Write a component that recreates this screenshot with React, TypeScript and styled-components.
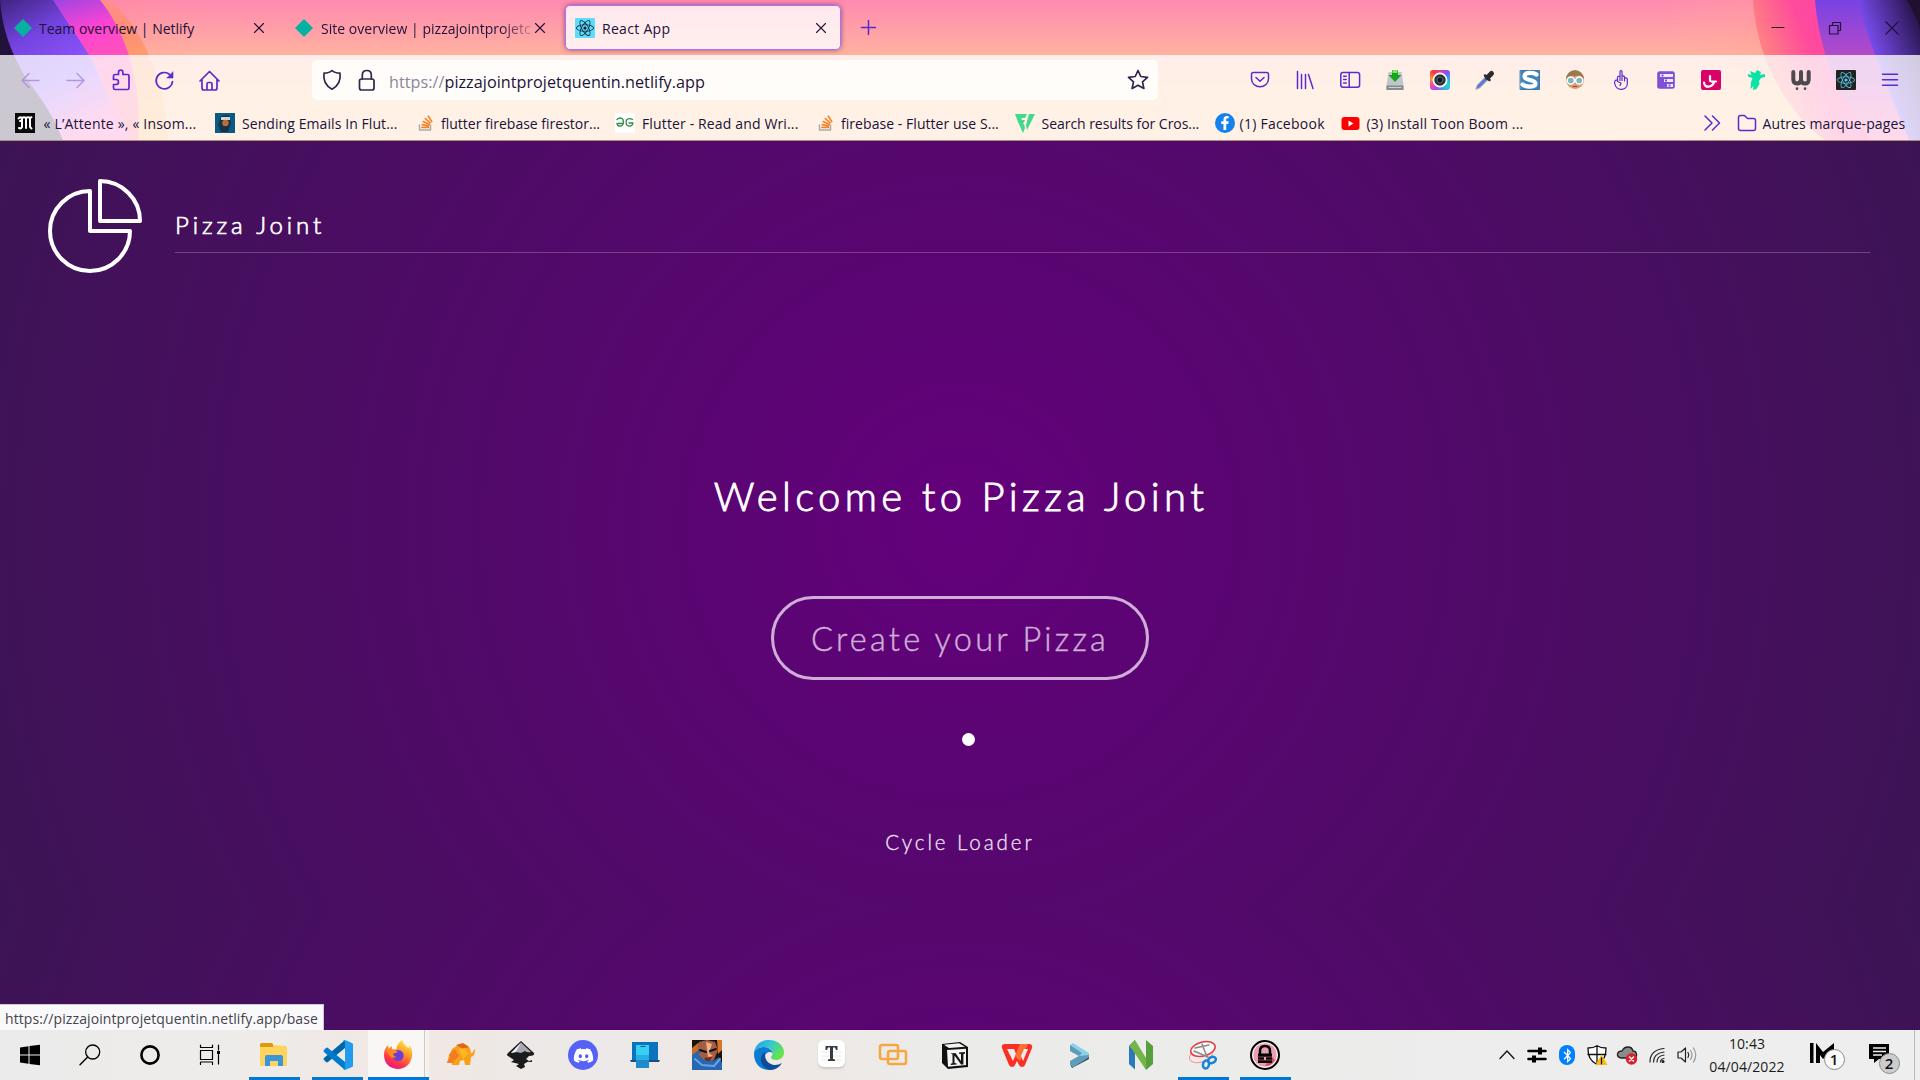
import React from 'react';
import styled, { createGlobalStyle } from 'styled-components';
import { FaDiscord, FaReact, FaBluetoothB, FaFacebookF } from 'react-icons/fa';

const GlobalStyle = createGlobalStyle`
  * { box-sizing: border-box; }
  html, body { margin: 0; padding: 0; }
  body { width: 1920px; height: 1080px; overflow: hidden; font-family: 'Open Sans', 'Noto Sans', sans-serif; }
  svg { display: block; overflow: visible; flex: none; }
`;

const ACCENT = '#5b2bcb';
const INK = '#20123a';

const Screen = styled.div`
  width: 1920px; height: 1080px; display: flex; flex-direction: column; position: relative;
`;
const Chrome = styled.header`
  position: relative; height: 141px; flex: none; display: flex; flex-direction: column; overflow: hidden;
  background: linear-gradient(180deg, #ff8ab0 0, #ffb2a0 55px, #ffc494 95px, #ffc494 100%);
`;
const Backdrop = styled.svg`
  position: absolute; left: 0; top: 0;
`;
const TabStrip = styled.div`
  position: relative; height: 55px; display: flex; align-items: center;
`;
const Tab = styled.div<{ $active?: boolean; $w: number; $pad: number }>`
  width: ${p => p.$w}px; height: 45px; display: flex; align-items: center; padding-left: ${p => p.$pad}px;
  padding-right: 10px; border-radius: 5px; border: 1px solid ${p => (p.$active ? '#ac70ff' : 'transparent')};
  background: ${p => (p.$active ? 'rgba(255,255,255,.8)' : 'transparent')};
  box-shadow: ${p => (p.$active ? '0 0 5px rgba(90,30,80,.65)' : 'none')};
`;
const TabTitle = styled.span<{ $fade?: boolean; $ls?: number }>`
  flex: 1; min-width: 0; margin-left: ${p => (p.$fade ? 8 : 7)}px; padding-top: 2px; font-size: 14px; line-height: 20px; letter-spacing: ${p => p.$ls ?? 0}px; color: ${INK}; white-space: nowrap;
  ${p => p.$fade && 'mask-image: linear-gradient(90deg, #000 84%, transparent 102%);'}
`;
const NewTab = styled.div`
  margin-left: 20px; flex: 1;
`;
const WindowControls = styled.div`
  display: flex; align-items: center; gap: 43px; padding-right: 21px;
`;
const Toolbars = styled.div`
  position: relative; height: 86px; background: rgba(255,255,255,.77); border-bottom: 1px solid #b08a74;
`;
const NavBar = styled.div`
  height: 50px; display: flex; align-items: center;
`;
const NavButtons = styled.div`
  width: 312px; display: flex; align-items: center; gap: 21.8px; padding-left: 19px;
`;
const UrlBar = styled.div`
  width: 846px; height: 40px; border-radius: 5px; background: rgba(255,253,250,.94); display: flex; align-items: center;
  padding: 0 9px 0 8px;
`;
const Url = styled.span`
  flex: 1; margin-left: 11px; font-size: 16.2px; line-height: 22px; color: ${INK}; letter-spacing: .03px; padding-top: 4px; white-space: nowrap;
`;
const UrlScheme = styled.span` color: #8d869a; `;
const Extensions = styled.div`
  flex: 1; display: flex; align-items: center; justify-content: space-between; padding: 0 21px 0 92px;
`;
const Bookmarks = styled.div`
  height: 35px; display: flex; align-items: center; padding-left: 14.5px; padding-top: 1px;
`;
const Bookmark = styled.div<{ $w: number; $ls?: number }>`
  width: ${p => p.$w}px; display: flex; align-items: center; gap: 7px; font-size: 14px; line-height: 20px; color: ${INK};
  white-space: nowrap; letter-spacing: ${p => p.$ls ?? 0}px;
`;
const BookmarkText = styled.span` padding-top: 2px; `;
const Spacer = styled.div<{ $w?: number }>` flex: ${p => (p.$w ? `0 0 ${p.$w}px` : '1')}; `;

const Page = styled.main`
  height: 889px; position: relative; color: #fff; font-family: Lato, 'Open Sans', sans-serif; font-weight: 300; padding-top: 38px;
  background: radial-gradient(circle, #64007c 0%, #3c1454 100%) 0 0 / 1920px 766px repeat-y;
`;
const PageHeader = styled.div`
  display: flex; padding-left: 50px; padding-right: 50px;
`;
const TitleBlock = styled.div`
  flex: 1; margin-left: 25px; height: 74px; border-bottom: 1px solid rgba(255,255,255,.22); padding-top: 29px;
`;
const SiteTitle = styled.h1`
  margin: 0; font-size: 24px; line-height: 34px; font-weight: 300; letter-spacing: 3.9px; -webkit-text-stroke: .7px #fff;
`;
const Hero = styled.section`
  display: flex; flex-direction: column; align-items: center; padding-top: 192px;
`;
const Welcome = styled.h2`
  margin: 0; font-size: 40px; line-height: 50px; font-weight: 300; letter-spacing: 4.35px; white-space: nowrap; padding-left: 2px;
  -webkit-text-stroke: .9px #fff;
`;
const CreateButton = styled.button`
  margin-top: 75px; width: 378px; height: 84px; border: 3px solid #ceadd6; border-radius: 42px; background: transparent; color: #ceadd6;
  font-family: inherit; font-size: 32.5px; font-weight: 300; letter-spacing: 3.25px; padding: 0; white-space: nowrap;
  -webkit-text-stroke: .45px #ceadd6;
`;
const Ball = styled.div`
  width: 13px; height: 13px; border-radius: 50%; background: #fff; margin: 53px 0 0 17px;
`;
const LoaderLabel = styled.div`
  margin-top: 83px; font-size: 20.6px; line-height: 26px; letter-spacing: 2.9px; white-space: nowrap; color: #eee3f1;
  -webkit-text-stroke: .3px #eee3f1;
`;
const Status = styled.div`
  position: absolute; left: 0; bottom: 50px; width: 324px; height: 26px; background: #f9f9fb; border-top: 1px solid #d0c8d4; border-right: 1px solid #d0c8d4;
  padding: 4px 0 0 5px; font-size: 14px; line-height: 20px; color: #45434c; white-space: nowrap; letter-spacing: .1px;
`;
const Taskbar = styled.footer`
  height: 50px; flex: none; display: flex; align-items: stretch;
  background: linear-gradient(90deg, #ebebeb 0, #eeecea 220px, #f0e8e3 400px, #ece9e8 600px, #f0e8e3 780px, #ebebea 920px, #eee 100%);
`;
const Slot = styled.div<{ $w?: number; $run?: boolean; $active?: boolean }>`
  width: ${p => p.$w ?? 62}px; display: flex; flex-direction: column; align-items: center; padding-top: 10px; justify-content: space-between;
  background: ${p => (p.$active ? 'linear-gradient(90deg, transparent 1px, #f8f7f6 1px, #f8f7f6 57px, #cfcac8 57px, #cfcac8 58px, #f4f1ef 58px)' : 'transparent')};
  &::after {
    content: ''; height: 3px; width: ${p => (p.$active ? 61 : 51)}px; background: ${p => (p.$run || p.$active ? '#0078d7' : 'transparent')};
    margin-left: ${p => (p.$active ? 1 : 0)}px;
  }
`;
const Tray = styled.div`
  display: flex; flex: 1; justify-content: flex-end; align-items: center;
`;
const TrayItem = styled.div<{ $w: number }>`
  width: ${p => p.$w}px; display: flex; justify-content: center; align-items: center;
`;
const Clock = styled.div`
  width: 88px; display: flex; flex-direction: column; align-items: center; font-size: 14px; line-height: 23px; color: #1b1b1b; padding: 0 0 1px 2px; letter-spacing: .1px;
`;
const Badged = styled.div`
  position: relative; height: 34px; width: 36px;
`;
const Badge = styled.span<{ $dark?: boolean }>`
  position: absolute; right: ${p => (p.$dark ? 1 : -1)}px; top: ${p => (p.$dark ? 15 : 11)}px; width: 21px; height: 21px; border-radius: 50%; border: 1px solid #8a8a8a;
  background: ${p => (p.$dark ? '#ccc' : '#fafafa')}; font-size: 15px; font-weight: 600; line-height: 19px; text-align: center; color: #111;
`;
const ShowDesktop = styled.div` width: 6px; height: 50px; border-left: 1px solid #bbb; `;
const Tile = styled.div<{ $bg: string; $c: string; $size?: number; $h?: number; $r?: number; $mr?: number; $lift?: boolean }>`
  width: ${p => p.$size ?? 20}px; height: ${p => p.$h ?? p.$size ?? 20}px; flex: none; display: flex; align-items: center; justify-content: center;
  background: ${p => p.$bg}; color: ${p => p.$c}; border-radius: ${p => p.$r ?? 0}px; margin-right: ${p => p.$mr ?? 0}px;
  box-shadow: ${p => (p.$lift ? '0 2px 2px #ccc' : 'none')};
`;

type IconProps = { s?: number; vb?: string; children: React.ReactNode; stroke?: string; sw?: number };
const Ico = ({ s = 20, vb = '0 0 20 20', children, stroke, sw = 1.5 }: IconProps) => (
  <svg width={s} height={s} viewBox={vb} fill={stroke ? 'none' : undefined} stroke={stroke} strokeWidth={stroke ? sw : undefined} strokeLinecap="round" strokeLinejoin="round">
    {children}
  </svg>
);
const Cross = () => <Ico s={10} vb="0 0 10 10" stroke={INK} sw={1.1}><path d="M.5.5l9 9M9.5.5l-9 9" /></Ico>;
const Diamond = () => <Ico s={18} vb="0 0 18 18"><path d="M9 0l9 9-9 9-9-9z" fill="#05b2a2" /></Ico>;
const StackIcon = () => (
  <Ico s={16} vb="0 0 16 16"><path d="M1.500 10v5h11v-5" fill="none" stroke="#a9abae" strokeWidth="1.5" />
    <path d="M4 12.400h6.500M4.200 9.600l6.400 1.200M5.200 6.600l5.900 2.700M7.300 3.600l4.900 4.200M10.300 1.200l3.500 5.400" stroke="#f48024" strokeWidth="1.6" /></Ico>
);

const ShapesBackdrop = () => (
  <Backdrop width="1920" height="141" viewBox="0 0 1920 141">
    <defs>
      <linearGradient id="glow" x1="0" x2="1"><stop offset="0" stopColor="#ff8a80" /><stop offset="1" stopColor="#ffa090" stopOpacity="0" /></linearGradient>
      <linearGradient id="orange" x1="0" x2=".3" y1="0" y2="1"><stop offset="0" stopColor="#ff8aa4" /><stop offset=".4" stopColor="#ff8f74" /><stop offset="1" stopColor="#ffb060" /></linearGradient>
      <linearGradient id="magenta" x1="0" x2=".25" y1="0" y2="1"><stop offset="0" stopColor="#7c44e6" /><stop offset=".34" stopColor="#ff44d4" /><stop offset="1" stopColor="#ff6a8a" /></linearGradient>
      <linearGradient id="indigo" x1="0" x2=".5" y1="0" y2="1"><stop offset="0" stopColor="#3f2480" /><stop offset=".3" stopColor="#7443e0" /><stop offset=".65" stopColor="#9058ff" /><stop offset="1" stopColor="#ff60c0" /></linearGradient>
      <linearGradient id="pinkR" gradientUnits="userSpaceOnUse" x1="1755" y1="20" x2="1805" y2="0"><stop offset="0" stopColor="#ff7d84" /><stop offset=".75" stopColor="#ff4b9c" /><stop offset="1" stopColor="#ff48a0" /></linearGradient>
      <linearGradient id="purpleR" x1="0" x2="0" y1="0" y2="1"><stop offset="0" stopColor="#7942e4" /><stop offset=".4" stopColor="#b44bc8" /><stop offset="1" stopColor="#ff5fa8" /></linearGradient>
      <linearGradient id="indigoR" x1=".9" x2=".3" y1="0" y2=".5"><stop offset="0" stopColor="#241245" /><stop offset="1" stopColor="#7f50fa" /></linearGradient>
      <linearGradient id="haze" x1="0" x2="1"><stop offset="0" stopColor="#ffb0a0" stopOpacity="0" /><stop offset="1" stopColor="#ff9f8c" /></linearGradient>
    </defs>
    <path d="M108 0H200V60H150z" fill="url(#glow)" opacity=".25" />
    <path d="M0 0H110C140 26 165 75 168 141H0z" fill="url(#orange)" />
    <path d="M0 0H100C128 35 142 85 138 141H0z" fill="url(#magenta)" />
    <path d="M0 0H53C72 30 92 55 101 80C112 105 124 120 130 141H0z" fill="url(#indigo)" />
    <path d="M0 0C2 30 12 55 26 78C42 100 55 118 63 141H0z" fill="#20123a" />
    <path d="M1660 0H1753C1756 30 1765 50 1775 76L1700 60z" fill="url(#haze)" opacity=".35" />
    <path d="M1753 0C1756 62 1792 118 1826 141H1920V0z" fill="url(#pinkR)" />
    <path d="M1815 0C1819 54 1842 105 1872 141H1920V0z" fill="url(#purpleR)" />
    <path d="M1857 0C1870 46 1889 90 1909 141H1920V0z" fill="url(#indigoR)" />
    <path d="M1907 0Q1914 12 1920 27V0z" fill="#20102f" />
  </Backdrop>
);

const ExtensionIcons = () => (
  <Extensions>
    <Ico stroke={ACCENT}><path d="M3.200 2.500h13.600q1.700 0 1.700 1.700v4.600a8.500 8 0 0 1-17 0V4.200q0-1.700 1.700-1.700zM6 7.500l4 3.800 4-3.800" /></Ico>
    <Ico stroke={ACCENT}><path d="M2.500 1.500v17M6.500 4.500v14M10.500 4.500v14M13.500 4.500l4.500 14" /></Ico>
    <Ico stroke={ACCENT}><rect x=".8" y="2.5" width="18.8" height="14.8" rx="2.2" /><path d="M9.200 2.500v15M3.600 6.300h2.600M3.600 9.600h2.600M3.600 12.900h2.600" /></Ico>
    <Ico><path d="M3.500 2h13l2 13v5h-17v-5z" fill="#c3c5cc" /><path d="M1.500 15.500h17V20h-17z" fill="#858b91" /><path d="M4 17.500h12" stroke="#c9d6c9" /><path d="M7 0h6v5h3.500L10 12 3.500 5H7z" fill="#18a51a" /><path d="M7.500 0h5v3h-5z" fill="#7ee66c" /></Ico>
    <Tile $bg="conic-gradient(#f03a8c,#8c4df0,#2aa4f5,#22d6c8,#49a0f5,#a14df0,#f04d9a,#ff9430,#f03a3a,#f03a8c)" $c="#fff" $r={3}>
      <Ico s={18} vb="0 0 18 18"><circle cx="9" cy="9" r="6.6" fill="#28323c" stroke="#fff" strokeWidth="1.7" /><circle cx="9" cy="9" r="3" fill="#101820" stroke="#566470" /></Ico>
    </Tile>
    <Ico><path d="M1 19l1.500-4 8-8 2.500 2.500-8 8z" fill="#5b78d8" stroke="#9aa2ae" /><path d="M10 5.500l4.500 4.500" stroke="#2b2b30" strokeWidth="2.5" strokeLinecap="round" /><path d="M12.500 7.500l4-4" stroke="#2b2b30" strokeWidth="5" strokeLinecap="round" /></Ico>
    <Ico><path d="M.5.5h19v19H.5z" fill="#4585bd" stroke="#3a76a8" /><path d="M16.500 4.500C13 2 4.500 2 4.500 6.500 4.500 11 15.500 9 15.500 13.500 15.500 17.500 6 17.300 2.500 14.500" fill="none" stroke="#fff" strokeWidth="4.2" /></Ico>
    <Ico><circle cx="10" cy="10" r="9" fill="#d99b73" /><path d="M1 9a9 9 0 0 1 18 0l-4-3.500-10 1z" fill="#9a7a4c" /><circle cx="5.8" cy="10.5" r="3.6" fill="#7fb6c4" stroke="#fff" strokeWidth="1.5" /><circle cx="14.2" cy="10.5" r="3.6" fill="#7fb6c4" stroke="#fff" strokeWidth="1.5" /><path d="M8 16.500h4" stroke="#a4473c" /></Ico>
    <Ico stroke={ACCENT} sw={1.2}><path d="M9 10.500V1.300q1-1.600 2 0v9.200M9 6.500q-2.300-.8-2.500 1V11M11 6q2.500-.5 2.500 1.500V11M13.500 8q2.800-.5 2.800 1.500v4c0 7.500-11 8-12.600 0-.5-2.500.8-3.800 2.800-3.500M6.500 11.500l3.500 1.500-1 2.500" /></Ico>
    <Ico><rect x="1.2" y="1.2" width="17.6" height="17.6" rx="2.5" fill="#7e50d4" /><path d="M4 4h13v3H4zM8 9h9v3H8zM11 14h6v3h-6z" fill="#efe6ff" /><path d="M5.500 4.500h2v2h-2zM9 9.500h2v2H9zM12.500 14.500h2v2h-2z" fill="#7e50d4" /></Ico>
    <Tile $bg="#d90368" $c="#fff" $r={2}><Ico><path d="M9 6v4.500q0 1 1.500 1H15M3 12.500q.5 5 5.500 4 4-1 4.500-5" fill="none" stroke="#fff" strokeWidth="2.2" /></Ico></Tile>
    <Ico><path d="M4 1l5 2 2-3 4 2-1 3 5-1v3l-4 1-2 3 .5 3-3 5-3.500 1 .5-4-3 3 .5-7 1.500-4-4-1-1-3 4 1z" fill="#0be2a6" /></Ico>
    <Ico stroke="#4b4b4b" sw={4}><path d="M2.300 2v7q0 4.500 3.700 4.500T10 9.500V2M10 9.500q0 4 4 4t3.700-4.500V2" /><path d="M6 18.600v.1M14 18.600v.1" strokeWidth="2.6" /></Ico>
    <Tile $bg="#222" $c="#56c7e8" $r={1}><FaReact size={18} /></Tile>
    <Ico s={18} vb="0 0 18 18" stroke={ACCENT}><path d="M1.500 3.300h15M1.500 8.700h15M1.500 14.300h15" /></Ico>
  </Extensions>
);

const BrowserChrome = () => (
  <Chrome>
    <ShapesBackdrop />
    <TabStrip>
      <Tab $w={281} $pad={13}><Diamond /><TabTitle>Team overview | Netlify</TabTitle><Cross /><Spacer $w={6} /></Tab>
      <Tab $w={284} $pad={13}><Diamond /><TabTitle $fade $ls={0.03}>Site overview | pizzajointprojetc</TabTitle><Cross /><Spacer $w={9} /></Tab>
      <Tab $active $w={276} $pad={9}>
        <Tile $bg="#5edcfc" $c="#123" $r={1}><FaReact size={18} /></Tile>
        <TabTitle $ls={0.3}>React App</TabTitle><Cross /><Spacer $w={4} />
      </Tab>
      <NewTab><Ico s={15} vb="0 0 15 15" stroke={ACCENT}><path d="M7.500.5v14M.5 7.500h14" /></Ico></NewTab>
      <WindowControls>
        <Ico s={14} vb="0 0 14 14" stroke={INK} sw={1.2}><path d="M1 6.500h12" /></Ico>
        <Ico s={14} vb="0 0 14 14" stroke={INK} sw={1.2}><path d="M1.500 4.500h8.500v8.500H1.500zM4.500 4V1.500h8v8H10.500" /></Ico>
        <Ico s={14} vb="0 0 14 14" stroke={INK} sw={1.2}><path d="M1 1l12 12M13 1L1 13" /></Ico>
      </WindowControls>
    </TabStrip>
    <Toolbars>
      <NavBar>
        <NavButtons>
          <Ico s={23} vb="0 0 23 23" stroke="#b297e0"><path d="M3 11.500h17M10 4.500l-7 7 7 7" /></Ico>
          <Ico s={23} vb="0 0 23 23" stroke="#b297e0"><path d="M3 11.500h17M13 4.500l7 7-7 7" /></Ico>
          <Ico s={23} vb="0 0 23 23" stroke={ACCENT} sw={1.7}><path d="M4 9V7.500q0-1.500 1.500-1.500H9V4q0-2.500 2.200-2.500T13.400 4v2H18q1.500 0 1.500 1.500v12q0 1.500-1.500 1.500H5.500Q4 21 4 19.500V16h2.500Q9 16 9 13.500T6.500 11H4z" transform="translate(.5 -.5)" /></Ico>
          <Ico s={23} vb="0 0 23 23" stroke={ACCENT} sw={1.7}><path d="M19.500 12.500a8.200 8.200 0 1 1-2.800-7" /><path d="M20 3v6h-6z" fill={ACCENT} strokeWidth=".6" /></Ico>
          <Ico s={23} vb="0 0 23 23" stroke={ACCENT} sw={1.7}><path d="M2 12l9.500-9.500L21 12M4 10.500V19q0 2 2 2h11q2 0 2-2v-8.500M9 21v-6q0-1.500 1.500-1.500h2q1.500 0 1.500 1.500v6" /></Ico>
        </NavButtons>
        <UrlBar>
          <Ico s={24} vb="0 0 24 24" stroke="#33244c" sw={1.7}><path d="M12 2.500q2.500 2.500 8 2.700 1.500 11-8 16-9.500-5-8-16 5.500-.2 8-2.700z" /></Ico>
          <Spacer $w={12} />
          <Ico s={22} vb="0 0 22 22" stroke="#33244c" sw={1.7}><rect x="3.5" y="10" width="14.5" height="11" rx="2" /><path d="M6.300 10V6q0-4.500 4.500-4.500T15.300 6v4" /></Ico>
          <Url><UrlScheme>https://</UrlScheme>pizzajointprojetquentin.netlify.app</Url>
          <Ico s={22} vb="0 0 22 22" stroke="#33244c" sw={1.7}><path d="M11 1.500l2.800 6 6.700.8-5 4.500 1.400 6.700-5.900-3.300-5.900 3.300 1.400-6.700-5-4.500 6.700-.8z" /></Ico>
        </UrlBar>
        <ExtensionIcons />
      </NavBar>
      <Bookmarks>
        <Bookmark $w={200.5} $ls={0.18}><Tile $bg="#090909" $c="#fff" $mr={2}><Ico><path d="M3.500 5.500Q5 3.500 7 5q2-1.500 4 0 2-1.500 4 0l1.500-.8M5 8q2 0 2-2v8q-1 2-3 1M11 5v10M15 5.500v8.500l1.500 1.500" fill="none" stroke="#fff" strokeWidth="2" /></Ico></Tile><BookmarkText>« L’Attente », « Insom...</BookmarkText></Bookmark>
        <Bookmark $w={203} $ls={0.08}><Tile $bg="#0b5a82" $c="#fff"><Ico><path d="M6 3l8-1 2 8-3 9H6L3 12z" fill="#153447" /><path d="M6 4h9v3H6z" fill="#c8d8d8" /><circle cx="10.5" cy="10" r="3.2" fill="#c06a3e" /></Ico></Tile><BookmarkText>Sending Emails In Flut...</BookmarkText></Bookmark>
        <Bookmark $w={197}><StackIcon /><BookmarkText>flutter firebase firestor...</BookmarkText></Bookmark>
        <Bookmark $w={203} $ls={0.14}><Tile $bg="#fff" $c="#2f8d46"><Ico><path d="M2 6.500q3.500-3 6 0 1.500 5-2 6.500Q2 13.500 2 10.500h6M17.500 6.500q-4-2-6 .5-1.500 5 2 6 4 .5 4.500-3h-4" fill="none" stroke="#2f8d46" strokeWidth="1.3" /></Ico></Tile><BookmarkText>Flutter - Read and Wri...</BookmarkText></Bookmark>
        <Bookmark $w={196.5} $ls={0.05}><StackIcon /><BookmarkText>firebase - Flutter use S...</BookmarkText></Bookmark>
        <Bookmark $w={200} $ls={-0.04}><Ico><path d="M0 1h12l-2 4H6l1 2h3l-2 4h1l1 4-2 5L3 9zM14 1h6l-8 16-1-5z" fill="#43d78f" /></Ico><BookmarkText>Search results for Cros...</BookmarkText></Bookmark>
        <Bookmark $w={126} $ls={0.25}><Tile $bg="#1382f0" $c="#fff" $r={10} $mr={-2}><FaFacebookF size={14} /></Tile><BookmarkText>(1) Facebook</BookmarkText></Bookmark>
        <Bookmark $w={200} $ls={0.16}><Ico s={19} vb="0 0 19 19"><rect x=".5" y="3" width="18" height="13" rx="3" fill="#f00" /><path d="M7.500 6.500l5 3-5 3z" fill="#fff" /></Ico><BookmarkText>(3) Install Toon Boom ...</BookmarkText></Bookmark>
        <Spacer />
        <Ico s={20} stroke={ACCENT}><path d="M3 3l7 7-7 7M10.500 3l7 7-7 7" /></Ico>
        <Spacer $w={16} />
        <Bookmark $w={182.5} $ls={0.1}><Ico s={18} vb="0 0 18 18" stroke={ACCENT}><path d="M.5 14.500V3.500q0-2 2-2h4l3 3h6q2 0 2 2v8q0 2-2 2h-13q-2 0-2-2z" /></Ico><BookmarkText>Autres marque-pages</BookmarkText></Bookmark>
      </Bookmarks>
    </Toolbars>
  </Chrome>
);

const PizzaPage = () => (
  <Page>
    <PageHeader>
      <svg width="100" height="100" viewBox="0 0 100 100" fill="none" stroke="#fff" strokeWidth="4" strokeLinejoin="round">
        <g transform="translate(0 12)">
          <path d="M40 40L80 40C80 62 62 80 40 80C18 80 0 62 0 40C0 18 18 0 40 0Z" />
          <path d="M50 30L50 -10C72 -10 90 8 90 30Z" />
        </g>
      </svg>
      <TitleBlock><SiteTitle>Pizza Joint</SiteTitle></TitleBlock>
    </PageHeader>
    <Hero>
      <Welcome>Welcome to Pizza Joint</Welcome>
      <CreateButton>Create your Pizza</CreateButton>
      <Ball />
      <LoaderLabel>Cycle Loader</LoaderLabel>
    </Hero>
  </Page>
);

const A = ({ children }: { children: React.ReactNode }) => <Ico s={30} vb="0 0 30 30">{children}</Ico>;

const DesktopTaskbar = () => (
  <Taskbar>
    <Slot $w={60}><A><path d="M5 7.400l8.500-1.200v8.300H5zM14.500 6L25 4.800v9.700H14.500zM5 15.500h8.500v8.300L5 22.600zM14.500 15.500H25v9.700L14.500 24z" /></A></Slot>
    <Slot $w={60}><A><circle cx="17.7" cy="12" r="7" fill="none" stroke="#000" strokeWidth="1.3" /><path d="M12.700 17L5 24.700" stroke="#000" strokeWidth="1.4" /></A></Slot>
    <Slot $w={60}><A><circle cx="15" cy="15" r="8.6" fill="none" stroke="#000" strokeWidth="2.6" /></A></Slot>
    <Slot $w={60}><A><path d="M5.500 10.500h12v9h-12zM5.500 5v2.500h12V5M5.500 24.500V22h12v2.500M23.500 5v5M23.500 14.500v9.500" fill="none" stroke="#000" strokeWidth="1.2" /><path d="M22 11h3v3h-3z" /></A></Slot>
    <Slot $w={68} $run><A><path d="M1 5q0-2 2-2h9q2 0 2 2l13 1q1 0 1 2v17q0 1-1 1H2q-1 0-1-1z" fill="#ffd35c" /><path d="M1 7V4.500Q1 3 3 3h9q2 0 2 2v2z" fill="#db9a0d" /><path d="M6 26V17q0-2 2-2h14q2 0 2 2v9h-5v-5h-8v5z" fill="#3996dd" /></A></Slot>
    <Slot $w={59} $run><A><path d="M22 0v8L5 22q-1 .8-2 0l-2-2q-1-1 0-2z" fill="#0065a9" /><path d="M22 30v-8L5 8q-1-.8-2 0l-2 2q-1 1 0 2z" fill="#007acc" /><path d="M22 0l7 3q1 .5 1 1.500v21q0 1-1 1.500l-7 3q-1.500 0-2-1 2 0 2-1.500v-25q0-1.500-2-1.500.5-1 2-1z" fill="#1f9cf0" /></A></Slot>
    <Slot $active><A><defs><linearGradient id="ff" x1=".8" y1="0" x2=".3" y2="1"><stop offset="0" stopColor="#fff04a" /><stop offset=".4" stopColor="#ff9a28" /><stop offset=".75" stopColor="#ff3647" /><stop offset="1" stopColor="#e31587" /></linearGradient></defs><path d="M19 0q1 4 5 7l2 1 .5-3Q30 10 29 16C28 24 22 29 15 29S1 24 1 15Q1 9 5 5l.5 4 3-3 1 4 4-1q0-5 5.500-9z" fill="url(#ff)" /><circle cx="15" cy="15.5" r="5.6" fill="#6b3dd6" /><path d="M3 10q5-2 9 0l3 2-5 2q1 3 4 3-5 2-7-1z" fill="#ff8a20" /></A></Slot>
    <Slot $w={61}><A><path d="M2 23l2-8 3-6 6-4 7-1 5 4 1 5q2 1 3-4l1 1q0 6-4 7l-1 8h-5l-1-5-4 1-1 4H7v-5l-2 3z" fill="#f9a01b" /><path d="M11 5l7-2 6 4-6 2z" fill="#e2641e" /><path d="M4 15l6-6 4 7-5 5zM2 23l4-7 3 7z" fill="#f27b24" /><path d="M14 9l6-1 3 6-5 5z" fill="#fcb91f" /></A></Slot>
    <Slot><A><path d="M15 1l13 12q1 3-5 3l-3 3 3 2-5 3 1 3-4 2-5-3 3-2-8-2 3-2-6-4Q0 15 2 13z" fill="#1b1b1b" /><path d="M15 2.500L25 12q-4 1-6-1l-4 2-5-1-5 1z" fill="#a9a9b4" /><path d="M15 2.500L10 12l-5 1z" fill="#ececf2" /><path d="M21 22l5-2v2zM24 25l3-1" fill="#222" /></A></Slot>
    <Slot><Tile $bg="#5662f6" $c="#fff" $size={30} $r={15}><FaDiscord size={21} /></Tile></Slot>
    <Slot><A><path d="M2 2h26v19H2z" fill="#0b73bd" /><path d="M0 20h30l-1 2H1z" fill="#17507f" /><path d="M6 5h13v23H6z" fill="#1e8ccc" /><path d="M6 5h13v10H6z" fill="#35d0f2" /><path d="M6 15h13v5H6z" fill="#27aee4" /><path d="M11 6.500h4" stroke="#0d4c7d" /></A></Slot>
    <Slot><Tile $bg="#1a1212" $c="#fff" $size={30}><A><path d="M0 8l6-5 5 3-5 9-6 4z" fill="#c96d20" /><path d="M7 2l8-2 8 2 3 8-4 10-7 4-7-5-3-8z" fill="#a55d42" /><path d="M14 2l6 2-3 9 4 3-5 1z" fill="#edb08c" /><path d="M0 15l7-5 3 2-4 2 6 6 9 1 6-4 3 6v7H0z" fill="#2866b0" /><path d="M8 10l6 2M18 11l6-2" stroke="#111" strokeWidth="2" /><path d="M3 19l7 6 12 1 6-7" fill="none" stroke="#62a5e8" strokeWidth="2" /><path d="M12 18l8-1-2 4h-4z" fill="#6b2f27" /><path d="M25 0h5v10l-4 4z" fill="#d8752b" /></A></Tile></Slot>
    <Slot><A><defs><linearGradient id="ed" x1="0" x2="1" y1="0" y2=".5"><stop offset="0" stopColor="#1c9ddf" /><stop offset=".5" stopColor="#32c6d7" /><stop offset="1" stopColor="#66e34e" /></linearGradient></defs><path d="M0 14C0 5 7 0 15 0c9 0 15 6 15 12.500 0 5-4 7.500-8 7.500-3 0-5-1-5-2.500 0-1 1.500-1.500 1.500-4C18.500 9 14 7 10 7 4 7 0 12 0 14z" fill="url(#ed)" /><path d="M0 14c0-3 4-7 10-7 4 0 8.500 3 8.500 6-2-2-7-1-8 4-1 6 5 10 10 9.500 3-.5 5-1.500 7-3C25 28 20 30 15 30 6 30 0 23 0 14z" fill="#0b7bd4" /><path d="M11 11.500q-5 4-4 10 2 7 9 8.500 7 0 12-7-5 3-10 1.500-8-3-7-13z" fill="#0e4c98" /></A></Slot>
    <Slot><Tile $bg="#fff" $c="#444" $size={27} $r={6} $lift><Ico s={27} vb="0 0 27 27"><path d="M4 12h19M4 16h19M4 20h19" stroke="#e6e6e6" /><path d="M7.500 10V6h12v4h-1.500l-1-2.500H15V19l2 .5V21h-7v-1.500l2-.5V7.500h-2L9 10z" fill="#3a3a3a" /></Ico></Tile></Slot>
    <Slot><A><rect x="2" y="5" width="18" height="14" rx="2" fill="none" stroke="#f6a742" strokeWidth="2.5" /><rect x="10" y="11" width="18" height="13" rx="2" fill="none" stroke="#f6a742" strokeWidth="2.5" /></A></Slot>
    <Slot><A><path d="M2 4l18-2 8 5v20L8 29l-6-6z" fill="#111" /><path d="M4 4.800l15-1.500 6 3.500L9 8zM7 10l19-1.300V25L8 26.700z" fill="#f4f4f4" /><path d="M4 6.500l3 3V25l-3-3.500z" fill="#111" /><path d="M10.500 13.500l5-.4 5.500 8v-7l-2-.3v-1.300l6-.4v1.300l-1.600.5v10.500l-2.400.2-6.500-9v7.500l2.200.3v1.200l-6 .4v-1.200l1.800-.6v-8.600z" fill="#151515" /></A></Slot>
    <Slot><A><path d="M3 4h24q4 0 3 4l-7 17q-1 2-3 2-2 0-3-2l-2-4-2 4q-1 2-3 2t-3-2L0 8q-1-4 3-4zM5 9l6 12 3-7-2-5z" fill="#fb2f23" fillRule="evenodd" /><path d="M13 16l5-12h8l-8 17z" fill="#ff7033" /><path d="M22 9h4l-5 12-2-5z" fill="#ededed" /></A></Slot>
    <Slot><A><path d="M6 24l2 4 17-9v-3z" fill="#234b59" /><path d="M6 5l3-2 16 10v4L9 27l-3-3v-3l9-5-9-5z" fill="#8bd3e6" /><path d="M6 5l12 8-3 3-9-5zM6 21l9-5 10-1v2L9 27l-3-3z" fill="#609bb9" /></A></Slot>
    <Slot><A><path d="M3 6l6-6v29.500L3 24z" fill="#2b79b9" /><path d="M9 0l11 18v12L6 9 3 6z" fill="#75b445" /><path d="M20 0l7 6v18l-7 6z" fill="#579f3d" /></A></Slot>
    <Slot $run><A><ellipse cx="13" cy="15" rx="12" ry="7" transform="rotate(-20 13 15)" fill="#f5eaea" stroke="#ed9a9a" /><ellipse cx="15" cy="9" rx="12.5" ry="7" transform="rotate(-15 15 9)" fill="#f8f8f8" stroke="#e33b42" strokeWidth="1.5" /><path d="M14 4l5 13M6 11l14 6M7 8l14-3" stroke="#8a8a8a" strokeWidth="1.5" /><ellipse cx="24" cy="20" rx="4" ry="3" transform="rotate(-25 24 20)" fill="none" stroke="#1b83d2" strokeWidth="2.5" /><ellipse cx="18" cy="24.5" rx="3" ry="4" transform="rotate(15 18 24.500)" fill="none" stroke="#1b83d2" strokeWidth="2.5" /></A></Slot>
    <Slot $run><A><circle cx="15" cy="15" r="14" fill="#e9a1b2" stroke="#000" strokeWidth="2" /><circle cx="15" cy="15" r="12.3" fill="none" stroke="#fff" /><path d="M22 17l3 3q-3 6-10 6l6-9z" fill="#d84a69" /><path d="M10 14v-3q0-5 5-5t5 5v3" fill="none" stroke="#000" strokeWidth="2.5" /><path d="M8 13.500h14V23H8z" /><path d="M8 17h14M8 20h14" stroke="#c96b80" strokeWidth=".7" /><path d="M14 17h2v3h-2z" fill="#e9a1b2" /></A></Slot>
    <Tray>
      <TrayItem $w={30}><Ico s={20} stroke="#111" sw={1.3}><path d="M3 13.500L10 6l7 7.500" /></Ico></TrayItem>
      <TrayItem $w={30}><Ico><path d="M1.500 6h17M1.500 14h17" stroke="#000" strokeWidth="2.6" /><path d="M11 2.500h4v7h-4zM5 10.500h4v7H5z" /></Ico></TrayItem>
      <TrayItem $w={30}><Tile $bg="#007fff" $c="#fff" $size={16} $h={20} $r={8}><FaBluetoothB size={15} /></Tile></TrayItem>
      <TrayItem $w={30}><Ico><path d="M10 .7q3.500 2.300 9 2.300.5 12-9 16.500Q.5 15 1 3q5.500 0 9-2.300zM10 .7v18M1 9.500h18" fill="#fff" stroke="#111" strokeWidth="1.3" /><path d="M14.500 9.500L20.500 20h-12z" fill="#fdb813" /><path d="M14.500 13v3.500M14.500 17.500v1.300" stroke="#111" strokeWidth="1.3" /></Ico></TrayItem>
      <TrayItem $w={30}><Ico><path d="M4 13Q0 12 .5 9T5 6q2-4 6-4t5 4q3 0 3.500 3T17 13z" fill="#8b8b8b" stroke="#222" strokeWidth="1.3" /><circle cx="14.5" cy="14" r="5.7" fill="#d91f2a" /><path d="M12.500 12l4 4M16.500 12l-4 4" stroke="#fff" strokeWidth="1.5" /></Ico></TrayItem>
      <TrayItem $w={30}><Ico s={18} vb="0 0 18 18" stroke="#222" sw={1.2}><path d="M2 16Q2 4 16 2.500M5.500 16q0-8.500 10.500-10M9 16q0-6 7-7M12.500 16q0-3 3.500-3.500" /><circle cx="15" cy="15.5" r="1" fill="#111" /></Ico></TrayItem>
      <TrayItem $w={30}><Ico s={20} stroke="#222" sw={1.2}><path d="M1 7h3l4.500-4v14L4 13H1zM11 7.500q1.500 2.500 0 5" /><path d="M13.500 5.500q3 4.500 0 9M16.500 3q4.500 7 0 14" stroke="#999" /></Ico></TrayItem>
      <Clock><span>10:43</span><span>04/04/2022</span></Clock>
      <TrayItem $w={71}><Badged><svg width="36" height="34" viewBox="0 0 36 34"><path d="M2 5h3.500v20H2zM8 25V5l7 9 11-9v20h-4V14l-7 7-3-4v8z" /></svg><Badge>1</Badge></Badged></TrayItem>
      <TrayItem $w={43}><Badged><svg width="36" height="34" viewBox="0 0 36 34"><path d="M4 6h20v15H14l-5 4v-4H4z" /><path d="M8 10h13M8 13.500h13M8 17h9" stroke="#eee" strokeWidth="1.3" /></svg><Badge $dark>2</Badge></Badged></TrayItem>
      <Spacer $w={10} />
      <ShowDesktop />
    </Tray>
  </Taskbar>
);

export default function App() {
  return (
    <Screen>
      <GlobalStyle />
      <BrowserChrome />
      <PizzaPage />
      <DesktopTaskbar />
      <Status>https://pizzajointprojetquentin.netlify.app/base</Status>
    </Screen>
  );
}
